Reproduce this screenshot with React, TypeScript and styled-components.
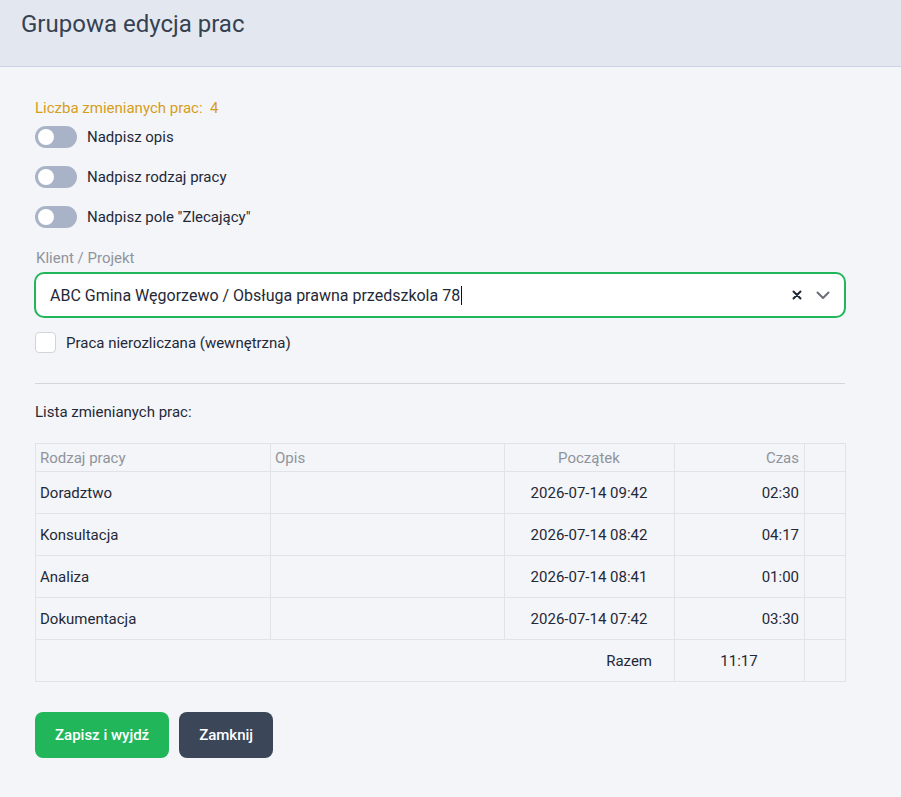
import React from 'react';
import styled, { createGlobalStyle } from 'styled-components';

const GlobalStyle = createGlobalStyle`
  html, body {
    margin: 0;
    padding: 0;
    background: #f4f5f9;
    font-family: Roboto, "Liberation Sans", Arial, sans-serif;
    color: #1f2937;
  }
`

const Page = styled.div`
  min-height: 797px;
  background: #f4f5f9;
`

const Header = styled.div`
  height: 67px;
  background: #e3e8f0;
  border-bottom: 1px solid #cdd2e6;
  padding: 0 21px;
  box-sizing: border-box;
`

const Title = styled.h1`
  margin: 0;
  padding-top: 9px;
  font-size: 24px;
  font-weight: 400;
  color: #364152;
  line-height: 30px;
`

const Content = styled.div`
  width: 810px;
  margin-left: 35px;
  padding-top: 32px;
`

const Counter = styled.div`
  font-size: 15px;
  color: #d69e1b;
  line-height: 18px;
  margin-bottom: 9px;
`

const ToggleRow = styled.label`
  display: flex;
  align-items: center;
  gap: 10px;
  height: 22px;
  margin-bottom: 18px;
  font-size: 15px;
  color: #1f2937;
`

const Toggle = styled.span`
  position: relative;
  width: 42px;
  height: 22px;
  border-radius: 11px;
  background: #a8b3c7;
  flex-shrink: 0;

  &::after {
    content: '';
    position: absolute;
    left: 3px;
    top: 3px;
    width: 16px;
    height: 16px;
    border-radius: 50%;
    background: #fff;
  }
`

const FieldLabel = styled.div`
  font-size: 15px;
  color: #8f949c;
  padding-top: 3px;
  line-height: 18px;
  padding-left: 1px;
`

const SelectBox = styled.div`
  display: flex;
  align-items: center;
  height: 46px;
  margin-top: 5px;
  margin-left: -1px;
  margin-right: -1px;
  border: 2px solid #22b65a;
  border-radius: 10px;
  background: #fff;
  padding: 0 14px 0 14px;
  box-sizing: border-box;
`

const SelectValue = styled.div`
  flex: 1;
  font-size: 16px;
  color: #1f2937;
  display: flex;
  align-items: center;
`

const Caret = styled.span`
  display: inline-block;
  width: 1px;
  height: 19px;
  background: #111;
  margin-left: 1px;
`

const SelectIcons = styled.div`
  display: flex;
  align-items: center;
  gap: 14px;
`

const CheckRow = styled.label`
  display: flex;
  align-items: center;
  gap: 10px;
  margin-top: 14px;
  font-size: 15px;
  color: #1f2937;
`

const CheckBox = styled.span`
  width: 21px;
  height: 21px;
  box-sizing: border-box;
  border: 1px solid #d1d5db;
  border-radius: 4px;
  background: #fff;
`

const Divider = styled.hr`
  border: none;
  border-top: 1px solid #d4d6dc;
  margin: 30px 0 0 0;
`

const ListTitle = styled.div`
  font-size: 15px;
  color: #1f2937;
  margin-top: 19px;
  line-height: 18px;
`

const Table = styled.table`
  width: 810px;
  margin-top: 22px;
  border-collapse: collapse;
  table-layout: fixed;
  font-size: 15px;
`

const Th = styled.th<{ $align?: string }>`
  height: 28px;
  padding: 0 5px 0 4px;
  border: 1px solid #e1e3e8;
  font-weight: 400;
  color: #8f949c;
  text-align: ${p => p.$align || 'left'};
  box-sizing: border-box;
`

const Td = styled.td<{ $align?: string }>`
  height: 42px;
  padding: 0 5px 0 4px;
  border: 1px solid #e1e3e8;
  color: #1f2937;
  text-align: ${p => p.$align || 'left'};
  box-sizing: border-box;
`

const TotalLabel = styled(Td)`
  padding-right: 22px;
`

const Buttons = styled.div`
  display: flex;
  gap: 10px;
  margin-top: 30px;
`

const Button = styled.button<{ $variant: 'primary' | 'dark' }>`
  height: 46px;
  padding: 0 20px;
  border: none;
  border-radius: 8px;
  font-family: inherit;
  font-size: 15px;
  font-weight: 500;
  color: #fff;
  background: ${p => (p.$variant === 'primary' ? '#22b65a' : '#3b4659')};
  cursor: pointer;
`

const rows = [
  { type: 'Doradztwo', start: '2026-07-14 09:42', time: '02:30' },
  { type: 'Konsultacja', start: '2026-07-14 08:42', time: '04:17' },
  { type: 'Analiza', start: '2026-07-14 08:41', time: '01:00' },
  { type: 'Dokumentacja', start: '2026-07-14 07:42', time: '03:30' },
]

const toggles = ['Nadpisz opis', 'Nadpisz rodzaj pracy', 'Nadpisz pole "Zlecający"']

export default function App() {
  return (
    <Page>
      <GlobalStyle />
      <Header>
        <Title>Grupowa edycja prac</Title>
      </Header>
      <Content>
        <Counter>Liczba zmienianych prac:&nbsp; 4</Counter>
        {toggles.map(t => (
          <ToggleRow key={t}>
            <Toggle />
            {t}
          </ToggleRow>
        ))}
        <FieldLabel>Klient / Projekt</FieldLabel>
        <SelectBox>
          <SelectValue>
            ABC Gmina Węgorzewo / Obsługa prawna przedszkola 78
            <Caret />
          </SelectValue>
          <SelectIcons>
            <svg width="10" height="10" viewBox="0 0 10 10">
              <path d="M1.5 1.5 L8.5 8.5 M8.5 1.5 L1.5 8.5" stroke="#1f2937" strokeWidth="2" strokeLinecap="round" />
            </svg>
            <svg width="14" height="9" viewBox="0 0 14 9">
              <path d="M1.5 1.5 L7 7 L12.5 1.5" stroke="#6b6f76" strokeWidth="2" fill="none" strokeLinecap="round" strokeLinejoin="round" />
            </svg>
          </SelectIcons>
        </SelectBox>
        <CheckRow>
          <CheckBox />
          Praca nierozliczana (wewnętrzna)
        </CheckRow>
        <Divider />
        <ListTitle>Lista zmienianych prac:</ListTitle>
        <Table>
          <colgroup>
            <col style={{ width: 235 }} />
            <col style={{ width: 234 }} />
            <col style={{ width: 170 }} />
            <col style={{ width: 130 }} />
            <col style={{ width: 41 }} />
          </colgroup>
          <thead>
            <tr>
              <Th>Rodzaj pracy</Th>
              <Th>Opis</Th>
              <Th $align="center">Początek</Th>
              <Th $align="right">Czas</Th>
              <Th />
            </tr>
          </thead>
          <tbody>
            {rows.map(r => (
              <tr key={r.type}>
                <Td>{r.type}</Td>
                <Td />
                <Td $align="center">{r.start}</Td>
                <Td $align="right">{r.time}</Td>
                <Td />
              </tr>
            ))}
            <tr>
              <TotalLabel colSpan={3} $align="right">Razem</TotalLabel>
              <Td $align="center">11:17</Td>
              <Td />
            </tr>
          </tbody>
        </Table>
        <Buttons>
          <Button $variant="primary">Zapisz i wyjdź</Button>
          <Button $variant="dark">Zamknij</Button>
        </Buttons>
      </Content>
    </Page>
  );
}
